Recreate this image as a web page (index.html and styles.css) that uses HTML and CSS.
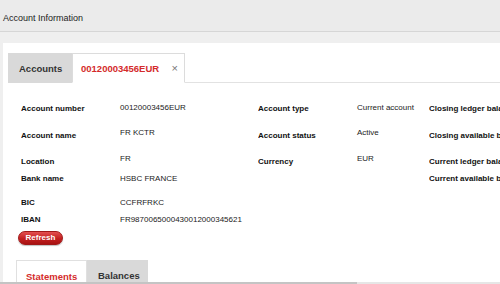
FILE: index.html
```html
<!DOCTYPE html>
<html>
<head>
<meta charset="utf-8">
<link rel="stylesheet" href="styles.css">
</head>
<body>
<div class="header">Account Information</div>
<div class="strip"></div>
<div class="panel">
  <div class="tabbar">
    <div class="tab tab-off">Accounts</div>
    <div class="tab tab-on"><span class="tab-red">00120003456EUR</span><span class="close">×</span></div>
    <div class="tab-fill"></div>
  </div>
  <div class="content">
    <div class="grid">
      <div class="lbl p1">Account number</div><div class="val">00120003456EUR</div>
      <div class="lbl p1">Account type</div><div class="val">Current account</div>
      <div class="lbl p1">Closing ledger balance</div>

      <div class="lbl p3">Account name</div><div class="val">FR KCTR</div>
      <div class="lbl p3">Account status</div><div class="val">Active</div>
      <div class="lbl p3">Closing available balance</div>

      <div class="lbl p3">Location</div><div class="val">FR</div>
      <div class="lbl p3">Currency</div><div class="val">EUR</div>
      <div class="lbl p3">Current ledger balance</div>

      <div class="lbl">Bank name</div><div class="val">HSBC FRANCE</div>
      <div class="lbl"></div><div class="val"></div>
      <div class="lbl">Current available balance</div>

      <div class="lbl">BIC</div><div class="val">CCFRFRKC</div>
      <div class="lbl"></div><div class="val"></div><div class="lbl"></div>

      <div class="lbl">IBAN</div><div class="val">FR9870065000430012000345621</div>
      <div class="lbl"></div><div class="val"></div><div class="lbl"></div>
    </div>
    <button class="refresh">Refresh</button>
    <div class="subtabs">
      <div class="subtab sub-on">Statements</div>
      <div class="subtab sub-off">Balances</div>
    </div>
  </div>
</div>
<div class="hscroll"><div class="thumb"></div></div>
</body>
</html>
```
FILE: styles.css
```css
html, body {
  margin: 0;
  padding: 0;
}
body {
  width: 500px;
  height: 284px;
  overflow: hidden;
  background: #efefef;
  font-family: "Liberation Sans", Arial, sans-serif;
  color: #111;
  position: relative;
}
.header {
  background: #ebebeb;
  border-bottom: 1px solid #d6d6d6;
  font-size: 9px;
  line-height: 12px;
  padding: 12px 0 0 3px;
  box-sizing: border-box;
  height: 32px;
  color: #222;
}
.strip {
  height: 11px;
  background: #efefef;
}
.panel {
  margin-left: 3px;
  background: #fff;
  padding-top: 9px;
  height: 232px;
}
.tabbar {
  display: flex;
  align-items: flex-end;
  padding-left: 5px;
  height: 31px;
}
.tab {
  box-sizing: border-box;
  font-size: 9.5px;
  font-weight: bold;
  line-height: 12px;
  display: flex;
  align-items: center;
}
.tab-off {
  background: #d9d9d9;
  height: 30px;
  padding: 2px 10px 0 11px;
  width: 64px;
  color: #333;
  border-bottom: 1px solid #d9d9d9;
}
.tab-on {
  height: 30px;
  width: 113px;
  border: 1px solid #dcdcdc;
  border-bottom: 1px solid #fff;
  padding: 2px 6px 0 8px;
  background: #fff;
}
.tab-red {
  color: #d42b2b;
  flex: 1;
}
.close {
  font-weight: normal;
  font-size: 11px;
  color: #777;
  margin-top: -2px;
}
.tab-fill {
  flex: 1;
  border-bottom: 1px solid #e2e2e2;
  height: 0;
}
.content {
  padding: 20px 0 0 15px;
}
.grid {
  margin-left: 3px;
  display: grid;
  grid-template-columns: 99px 138px 99px 72px 1fr;
  grid-template-rows: 25px 26px 20px 24px 17px 16px;
  font-size: 8px;
  line-height: 10px;
  white-space: nowrap;
  overflow: hidden;
}
.lbl {
  font-weight: bold;
  color: #111;
  overflow: hidden;
}
.p1 { padding-top: 1px; }
.p3 { padding-top: 3px; }
.val {
  color: #222;
}
.refresh {
  display: block;
  height: 14px;
  width: 45px;
  padding: 0;
  border: 1px solid #a01818;
  border-radius: 7px;
  background: linear-gradient(#e35050, #c32020 55%, #a81212);
  color: #fff;
  font-family: "Liberation Sans", Arial, sans-serif;
  font-weight: bold;
  font-size: 8px;
  line-height: 12px;
  box-shadow: 0 1px 1px rgba(0,0,0,0.25);
}
.subtabs {
  display: flex;
  margin-top: 15px;
  margin-left: -2px;
}
.subtab {
  box-sizing: border-box;
  height: 24px;
  font-size: 9.5px;
  font-weight: bold;
  line-height: 12px;
  padding-top: 10px;
}
.sub-on {
  width: 71px;
  padding-left: 9px;
  border: 1px solid #e0e0e0;
  border-bottom: none;
  color: #d42b2b;
}
.sub-off {
  width: 61px;
  padding-left: 11px;
  background: #d9d9d9;
  color: #333;
}
.hscroll {
  position: absolute;
  left: 0;
  right: 0;
  bottom: 0;
  height: 2px;
  background: #e6e6e6;
}
.thumb {
  width: 357px;
  height: 2px;
  background: #c4c4c4;
}
```
